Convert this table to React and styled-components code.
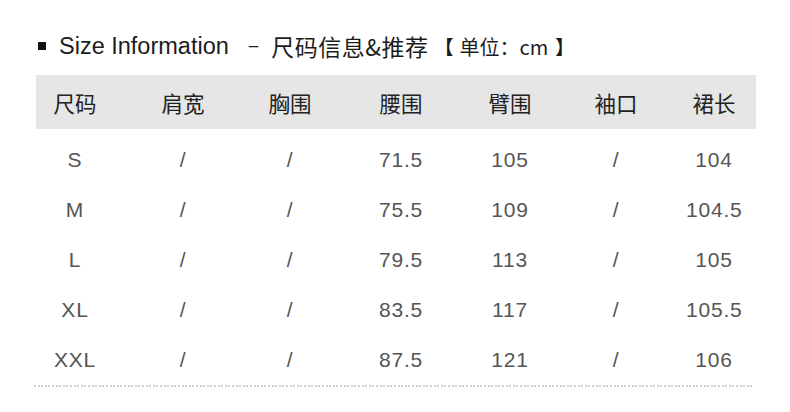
import React from "react";
import styled, { createGlobalStyle } from "styled-components";

const Global = createGlobalStyle`
  html, body { margin: 0; padding: 0; background: #fff; }
  body { font-family: "Liberation Sans", "Noto Sans CJK SC", sans-serif; }
`;

const COLS = "78px 138px 76px 146px 72px 140px 56px";

const Page = styled.div`
  width: 790px;
  height: 412px;
  background: #fff;
  padding-top: 31px;
  box-sizing: border-box;
`;

const Title = styled.div`
  display: flex;
  align-items: center;
  height: 30px;
  padding-left: 38px;
  color: #1c1c1c;
  font-family: "Liberation Sans", "Noto Sans CJK SC", sans-serif;
  font-size: 23.5px;
  white-space: nowrap;
`;

const Bullet = styled.span`
  width: 8px;
  height: 8px;
  background: #111;
  margin-right: 13px;
  flex: none;
`;

const Dash = styled.span`
  font-size: 17px;
  margin: 0 13px 0 20px;
`;

const Cn = styled.span`
  font-family: "Noto Sans CJK SC", sans-serif;
  font-size: 23px;
  letter-spacing: 0.5px;
`;

const Unit = styled.span`
  font-family: "Noto Sans CJK SC", sans-serif;
  font-size: 20px;
  margin-left: 6px;
  display: flex;
  align-items: center;
`;

const Bracket = styled.span`
  font-weight: 700;
  font-size: 19px;
  margin: ${(p) => (p.$right ? "0 0 0 7px" : "0 6px 0 0")};
`;

const Table = styled.div`
  margin: 14px 0 0 36px;
  width: 720px;
`;

const HeadRow = styled.div`
  display: grid;
  grid-template-columns: ${COLS};
  height: 54px;
  align-items: center;
  background: #e6e6e6;
  font-family: "Noto Sans CJK SC", sans-serif;
  font-size: 21.5px;
  color: #222;
`;

const Body = styled.div`
  padding-top: 6px;
`;

const Row = styled.div`
  display: grid;
  grid-template-columns: ${COLS};
  height: 50px;
  align-items: center;
  font-family: "Liberation Sans", sans-serif;
  font-size: 21px;
  letter-spacing: 0.8px;
  color: #555;
`;

const Cell = styled.div`
  text-align: center;
  white-space: nowrap;
`;

const Divider = styled.div`
  margin-left: -2px;
  width: 718px;
  height: 2px;
  background: repeating-linear-gradient(
    to right,
    #cfcfcf 0 2px,
    transparent 2px 3.6px
  );
`;

const headers = ["尺码", "肩宽", "胸围", "腰围", "臂围", "袖口", "裙长"];
const rows = [
  ["S", "/", "/", "71.5", "105", "/", "104"],
  ["M", "/", "/", "75.5", "109", "/", "104.5"],
  ["L", "/", "/", "79.5", "113", "/", "105"],
  ["XL", "/", "/", "83.5", "117", "/", "105.5"],
  ["XXL", "/", "/", "87.5", "121", "/", "106"],
];

export default function App() {
  return (
    <Page>
      <Global />
      <Title>
        <Bullet />
        <span>Size Information</span>
        <Dash>–</Dash>
        <Cn>尺码信息&amp;推荐</Cn>
        <Unit>
          <Bracket>【</Bracket>
          单位：cm
          <Bracket $right>】</Bracket>
        </Unit>
      </Title>
      <Table>
        <HeadRow>
          {headers.map((h) => (
            <Cell key={h}>{h}</Cell>
          ))}
        </HeadRow>
        <Body>
          {rows.map((r) => (
            <Row key={r[0]}>
              {r.map((c, i) => (
                <Cell key={i}>{c}</Cell>
              ))}
            </Row>
          ))}
        </Body>
        <Divider />
      </Table>
    </Page>
  );
}
